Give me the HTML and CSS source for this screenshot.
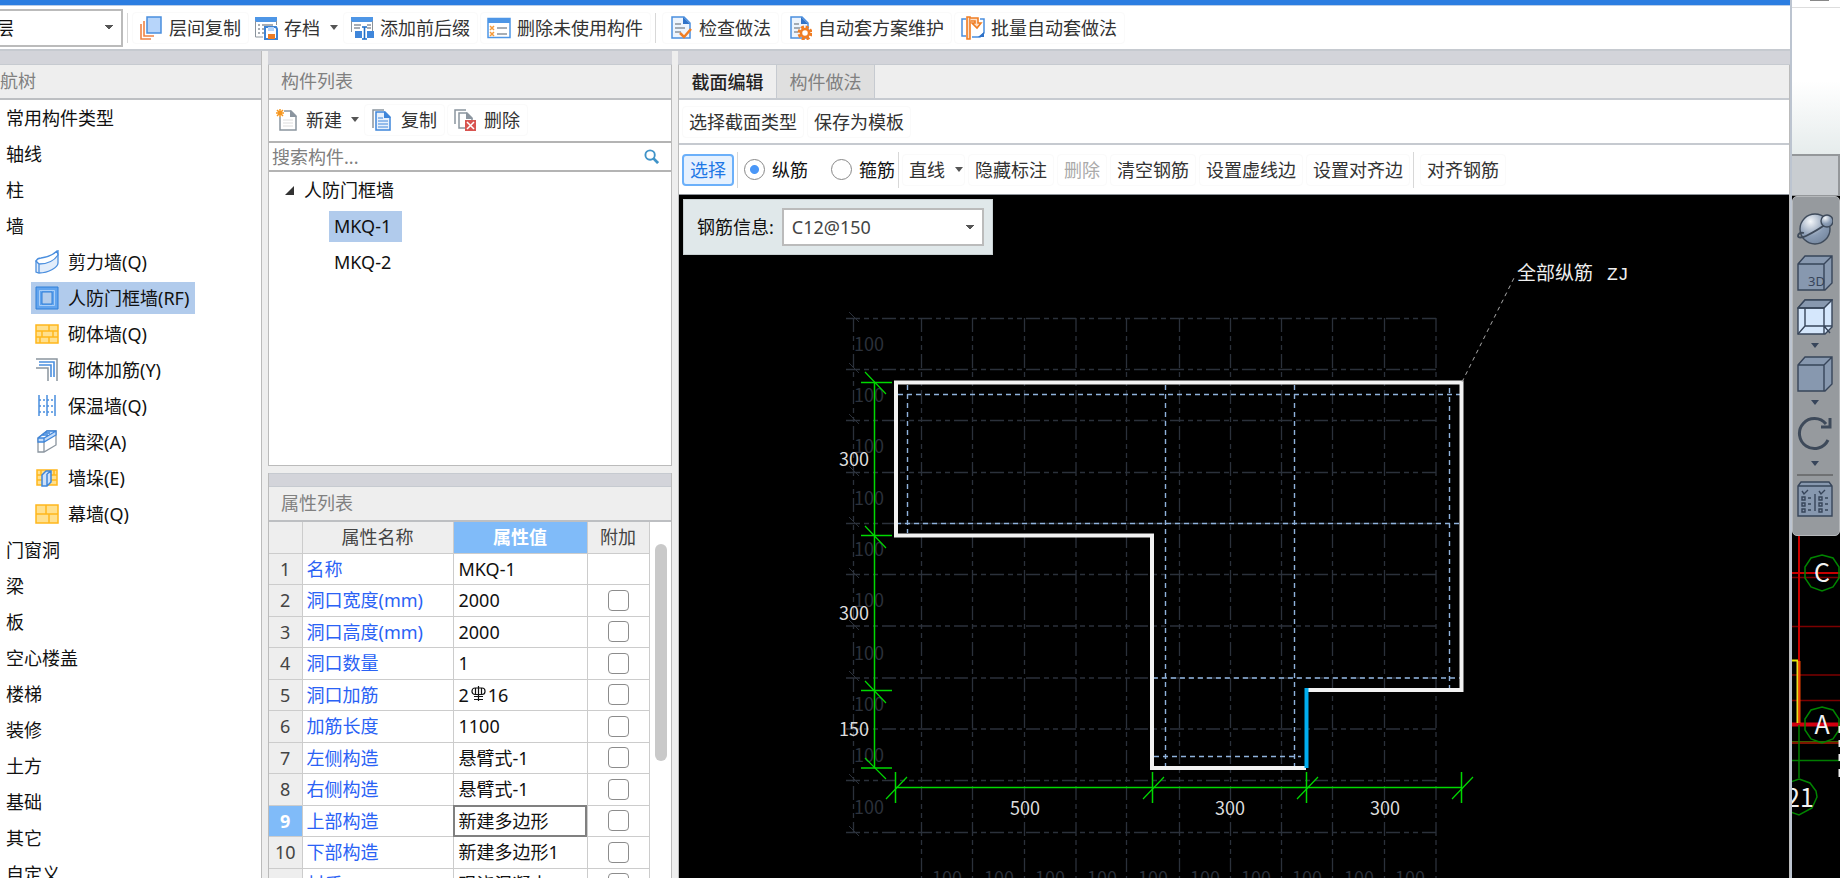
FILE: index.html
```html
<!DOCTYPE html>
<html lang="zh-CN">
<head>
<meta charset="utf-8">
<title>截面编辑</title>
<link rel="stylesheet" href="styles.css">
</head>
<body>
<main class="app">
  <div class="titlebar"></div>
  <div class="toolbar main-toolbar">
    <select class="combo floor-combo" aria-label="楼层"><option>层</option></select>
    <span class="sep first"></span>
    <button class="btn"><svg class="icon" viewBox="0 0 24 24" fill="none"><path d="M2 8v15h10M5 5v15h10" stroke="#ee8345" stroke-width="1.600"/><path d="M8 1h14v16H8z" fill="#b7d5fa" stroke="#4a8ede" stroke-width="1.500"/></svg>层间复制</button>
    <button class="btn drop"><svg class="icon" viewBox="0 0 24 24" fill="none"><path d="M1 1h22v5H1z" fill="#4e96e6"/><path d="M1.500 5v16H9M22.500 5v4" stroke="#8a939c"/><path d="M4 9h2M8 9h11M4 13h2M8 13h3M4 17h2M8 17h2" stroke="#8a939c" stroke-width="1.500"/><path d="M11 11h11l1 2v10H11z" fill="#fff" stroke="#3d83d4" stroke-width="2"/><path d="M14 11h6v4h-6z" fill="#b7d5fa"/><path d="M14 18h7v5h-7z" fill="#f07d23"/></svg>存档<i class="caret"></i></button>
    <button class="btn"><svg class="icon" viewBox="0 0 24 24" fill="none"><path d="M1 1h22v5H1z" fill="#4e96e6"/><path d="M1.500 5v11M22.500 5v11" stroke="#8a939c"/><path d="M4 9h7M4 12h6M17 9h4M17 12h4" stroke="#8a939c" stroke-width="1.500"/><path d="M5 15h7v7H5zM17 15h7v7h-7z" fill="#3f86da"/><path d="M12 11h5M14.500 11v12M12 23h5" stroke="#1e6dc6" stroke-width="1.600"/></svg>添加前后缀</button>
    <button class="btn"><svg class="icon" viewBox="0 0 24 24" fill="none"><path d="M1 2.500h22v19H1z" fill="#fff" stroke="#4e96e6" stroke-width="1.500"/><path d="M1 2h22v5H1z" fill="#4e96e6"/><path d="m3 10 4 4m0-4-4 4m0 2 4 4m0-4-4 4" stroke="#f59a3a" stroke-width="1.500"/><path d="M10 12h10M10 18h10" stroke="#8a939c" stroke-width="1.500"/></svg>删除未使用构件</button>
    <span class="sep"></span>
    <button class="btn"><svg class="icon" viewBox="0 0 24 24" fill="none"><path d="M3 1h12l6 6v15H3z" fill="#edf4fd" stroke="#4a8ede" stroke-width="1.500"/><path d="M14 1v7h7z" fill="#2f72c8"/><path d="M6 8h6M6 12h10M6 16h6" stroke="#8a939c" stroke-width="1.500"/><path d="m11 17 4 4 7-8" stroke="#f07d23" stroke-width="2.500"/></svg>检查做法</button>
    <button class="btn"><svg class="icon" viewBox="0 0 24 24" fill="none"><path d="M3 1h11l6 6v15H3z" fill="#edf4fd" stroke="#4a8ede" stroke-width="1.500"/><path d="M13 1v7h7z" fill="#2f72c8"/><path d="M6 8h5M6 12h6M6 16h4" stroke="#8a939c" stroke-width="1.500"/><circle cx="17" cy="17" r="6" stroke="#f07d23" stroke-width="3" stroke-dasharray="3 1.700"/><circle cx="17" cy="17" r="4" fill="#fff" stroke="#f07d23" stroke-width="2.500"/></svg>自动套方案维护</button>
    <button class="btn"><svg class="icon" viewBox="0 0 24 24" fill="none"><path d="M5 3H1v17h4M19 3h4v14l-4 4h-8" stroke="#4a8ede" stroke-width="1.500"/><path d="M23 16v5h-6z" fill="#2f72c8"/><path d="M6 1h3v22H6z" fill="#fbe0cb" stroke="#f07d23" stroke-width="1.600"/><path d="M9 2h8v5h3l-4 5-5-5h3V5h-4" fill="#fbe0cb" stroke="#f07d23" stroke-width="1.600"/></svg>批量自动套做法</button>
  </div>
  <div class="workspace">
    <section class="panel nav-panel">
      <div class="strip"></div>
      <h2 class="panel-title"><span class="nav-title">导航树</span></h2>
      <ul class="tree">
        <li>常用构件类型</li><li>轴线</li><li>柱</li><li>墙</li>
        <li class="sub"><span class="node"><svg viewBox="0 0 24 24" fill="#e2edfb" stroke="#4a8ede" stroke-width="1.300"><path d="M1 11v11l3 1c10 0 19-6 19-10V1c-4 6-12 9-22 10z"/><path d="M1 11c1-2 2-3 5-3C13 7 19 4 22 1l1 4c-4 6-11 9-19 9zM4 14v9" fill="#fff"/></svg>剪力墙(Q)</span></li>
        <li class="sub"><span class="node selected"><svg viewBox="0 0 24 24" fill="#62a4ee" stroke="#2f7fd8"><path d="M1 1h22v22H1z"/><path d="M4.500 4.500h15v15h-15z" stroke="#a8cef8"/><path d="M7 6h10v12H7z" fill="#b4cdec"/></svg>人防门框墙(RF)</span></li>
        <li class="sub"><span class="node"><svg viewBox="0 0 24 24" fill="#ffe08e" stroke="#ffb71c" stroke-width="1.500"><path d="M1 3h22v18H1zM1 9h22M1 15h22M14 3v6M7 9v6M18 9v6M5 15v6M14 15v6"/></svg>砌体墙(Q)</span></li>
        <li class="sub"><span class="node"><svg viewBox="0 0 24 24" fill="none"><path d="M1 1h21v22M1 10h12v13" stroke="#8b959f" stroke-width="1.500"/><path d="M4 4h15v15M4 7h12v12" stroke="#4a8ede" stroke-width="1.600"/></svg>砌体加筋(Y)</span></li>
        <li class="sub"><span class="node"><svg viewBox="0 0 24 24" fill="none" stroke="#4a8ede"><path d="M4 1v21M12 1v21M20 1v21" stroke-width="1.500"/><path d="M4 6h16M4 12h16M4 18h16" stroke-dasharray="2 2" stroke-width="1.300"/></svg>保温墙(Q)</span></li>
        <li class="sub"><span class="node"><svg viewBox="0 0 24 24" fill="#fff" stroke="#8b959f" stroke-width="1.300"><path d="M3 8v14h6l12-7V1H12z"/><path d="M9 11v11"/><path d="M3 8 12 1h9v4L9 12H3zM9 8v4M3 8h6l12-7M7 5h6M9 3h6" fill="#c5dcf8" stroke="#3f86da"/></svg>暗梁(A)</span></li>
        <li class="sub"><span class="node"><svg viewBox="0 0 24 24" fill="#ffe08e" stroke="#ffb71c" stroke-width="1.500"><path d="M2 4h20v15H2zM2 9h20M2 14h20M6 4v5M19 4v5"/><path d="m7 9 4-4h5v11l-4 4H7zM12 8v12M12 8l4-3" fill="#cfe1f8" stroke="#3f86da"/></svg>墙垛(E)</span></li>
        <li class="sub"><span class="node"><svg viewBox="0 0 24 24" fill="#ffe08e" stroke="#ffb71c" stroke-width="1.500"><path d="M1 3h22v18H1zM1 12h22M11 3v9M14 12v9"/></svg>幕墙(Q)</span></li>
        <li>门窗洞</li><li>梁</li><li>板</li><li>空心楼盖</li><li>楼梯</li><li>装修</li><li>土方</li><li>基础</li><li>其它</li><li>自定义</li>
      </ul>
    </section>
    <div class="middle">
      <section class="panel list-panel">
        <div class="strip"></div>
        <h2 class="panel-title">构件列表</h2>
        <div class="toolbar list-toolbar">
          <button class="btn drop"><svg class="icon small" viewBox="0 0 22 22" fill="none"><path d="M4 2h11l5 5v14H4z" fill="#fff" stroke="#8b959f" stroke-width="1.500"/><path d="M14 1v7h7z" fill="#8b959f"/><path d="M7 11h10M7 14h10M7 17h10" stroke="#ddd"/><path d="M0 0h8v8H0z" fill="#fff"/><path d="M4 0v8M0 4h8M1 1l6 6M7 1 1 7" stroke="#f6961e" stroke-width="1.500"/></svg>新建<i class="caret"></i></button>
          <button class="btn"><svg class="icon small" viewBox="0 0 22 22" fill="none"><path d="M2 19V1h11" stroke="#8b959f" stroke-width="1.500"/><path d="M5 3h9l5 5v13H5z" fill="#e8f1fc" stroke="#3f86da" stroke-width="1.500"/><path d="M13 2v7h7z" fill="#3f86da"/><path d="M7 9h5M7 12h10M7 15h10M7 18h10" stroke="#3f86da"/></svg>复制</button>
          <button class="btn"><svg class="icon small" viewBox="0 0 22 22" fill="none"><path d="M1 15V1h11" stroke="#8b959f" stroke-width="1.500"/><path d="M11 19H5V4h8l5 5v3" stroke="#8b959f" stroke-width="1.500"/><path d="M12 3v7h7z" fill="#8b959f"/><path d="M11 11h11v11H11z" fill="#d85450"/><path d="m13 13 7 7m0-7-7 7" stroke="#fff" stroke-width="1.500"/></svg>删除</button>
        </div>
        <label class="search"><input type="text" placeholder="搜索构件..." aria-label="搜索构件"><svg viewBox="0 0 16 16" fill="none" stroke="#3f93c8"><circle cx="6.500" cy="6.500" r="5" stroke-width="2"/><path d="m10 10 5 5" stroke-width="3"/></svg></label>
        <ul class="comp-tree">
          <li><svg viewBox="0 0 10 10"><path d="M10 0v10H0z" fill="#333"/></svg>人防门框墙</li>
          <li class="leaf"><span class="selected">MKQ-1</span></li>
          <li class="leaf"><span>MKQ-2</span></li>
        </ul>
      </section>
      <section class="panel prop-panel">
        <div class="strip"></div>
        <h2 class="panel-title">属性列表</h2>
        <div class="prop-body">
          <table class="props">
            <colgroup><col class="c-no"><col class="c-name"><col class="c-value"><col class="c-add"></colgroup>
            <thead><tr><th></th><th>属性名称</th><th class="active">属性值</th><th>附加</th></tr></thead>
            <tbody>
              <tr><th>1</th><td class="name">名称</td><td>MKQ-1</td><td></td></tr>
              <tr><th>2</th><td class="name">洞口宽度(mm)</td><td>2000</td><td class="check"><input type="checkbox" aria-label="附加 洞口宽度"></td></tr>
              <tr><th>3</th><td class="name">洞口高度(mm)</td><td>2000</td><td class="check"><input type="checkbox" aria-label="附加 洞口高度"></td></tr>
              <tr><th>4</th><td class="name">洞口数量</td><td>1</td><td class="check"><input type="checkbox" aria-label="附加 洞口数量"></td></tr>
              <tr><th>5</th><td class="name">洞口加筋</td><td>2<svg class="rebar" viewBox="0 0 17 15" fill="none" stroke="#111" stroke-width="1.200"><path d="M8.500 0v15M4 10.500h9M4 13.500h9M5.500 2v6.500M11.500 2v6.500"/><rect x="2" y="2" width="13" height="6.500" rx="3"/></svg>16</td><td class="check"><input type="checkbox" aria-label="附加 洞口加筋"></td></tr>
              <tr><th>6</th><td class="name">加筋长度</td><td>1100</td><td class="check"><input type="checkbox" aria-label="附加 加筋长度"></td></tr>
              <tr><th>7</th><td class="name">左侧构造</td><td>悬臂式-1</td><td class="check"><input type="checkbox" aria-label="附加 左侧构造"></td></tr>
              <tr><th>8</th><td class="name">右侧构造</td><td>悬臂式-1</td><td class="check"><input type="checkbox" aria-label="附加 右侧构造"></td></tr>
              <tr><th class="active">9</th><td class="name">上部构造</td><td class="editing">新建多边形</td><td class="check"><input type="checkbox" aria-label="附加 上部构造"></td></tr>
              <tr><th>10</th><td class="name">下部构造</td><td>新建多边形1</td><td class="check"><input type="checkbox" aria-label="附加 下部构造"></td></tr>
              <tr><th>11</th><td class="name">材质</td><td>现浇混凝土</td><td class="check"><input type="checkbox" aria-label="附加 材质"></td></tr>
            </tbody>
          </table>
          <div class="scroll"><div class="thumb"></div></div>
        </div>
      </section>
    </div>
    <section class="panel editor">
      <div class="strip"></div>
      <div class="tabs" role="tablist"><button class="tab current" role="tab">截面编辑</button><button class="tab" role="tab">构件做法</button></div>
      <div class="toolbar type-bar"><button class="btn text">选择截面类型</button><button class="btn text">保存为模板</button></div>
      <div class="toolbar draw-bar">
        <button class="btn text pressed">选择</button><span class="sep"></span>
        <label class="radio"><input type="radio" name="bar" checked>纵筋</label>
        <label class="radio"><input type="radio" name="bar">箍筋</label><span class="sep"></span>
        <button class="btn text line">直线<i class="caret"></i></button>
        <button class="btn text">隐藏标注</button><button class="btn text" disabled>删除</button><button class="btn text">清空钢筋</button><button class="btn text">设置虚线边</button><button class="btn text">设置对齐边</button><span class="sep"></span>
        <button class="btn text">对齐钢筋</button>
      </div>
      <div class="canvas">
        <svg class="drawing" width="1111" height="683" viewBox="679 195 1111 683" fill="none">
          <g stroke="#2b313b" stroke-width="1.300" stroke-dasharray="14 4 5 4 5 4">
            <path d="M846 318.500H1436"/><path d="M846 369.500H1436"/><path d="M846 420.500H1436"/><path d="M846 472.500H1436"/><path d="M846 523.500H1436"/><path d="M846 574.500H1436"/><path d="M846 626H1436"/><path d="M846 678H1436"/><path d="M846 729H1436"/><path d="M846 780.500H1436"/><path d="M846 832.500H1436"/>
            <path d="M853.500 318V833"/><path d="M921.500 318V878"/><path d="M972.500 318V878"/><path d="M1024.500 318V878"/><path d="M1076 318V878"/><path d="M1126.500 318V878"/><path d="M1179.500 318V878"/><path d="M1230.500 318V878"/><path d="M1281.500 318V878"/><path d="M1332.500 318V878"/><path d="M1384.500 318V878"/><path d="M1436 318V878"/>
          </g>
          <path stroke="#2b313b" d="m849 312 10 10m-10 41 10 10m-10 41 10 10m-10 42 10 10m-10 41 10 10m-10 41 10 10m-10 42 10 10m-10 41 10 10m-10 42 10 10m-10 41 10 10m-10 42 10 10"/>
          <g class="grid-label">
            <text x="854" y="351">100</text><text x="854" y="402">100</text><text x="854" y="453">100</text><text x="854" y="505">100</text><text x="854" y="556">100</text><text x="854" y="607">100</text><text x="854" y="660">100</text><text x="854" y="711">100</text><text x="854" y="762">100</text><text x="854" y="814">100</text>
          </g>
          <g class="grid-label mid">
            <text x="947" y="885">100</text><text x="999" y="885">100</text><text x="1050" y="885">100</text><text x="1102" y="885">100</text><text x="1153" y="885">100</text><text x="1205" y="885">100</text><text x="1256" y="885">100</text><text x="1307" y="885">100</text><text x="1359" y="885">100</text><text x="1410" y="885">100</text>
          </g>
          <g stroke="#8fb2dc" stroke-width="1.400" stroke-dasharray="5 4">
            <path d="M898 394.500H1460"/><path d="M896 523.500H1460"/><path d="M1153 678H1460"/><path d="M1154 756.500H1301"/>
            <path d="M907.500 385V533"/><path d="M1165.500 385V766"/><path d="M1294.500 385V766"/><path d="M1449.500 388V690"/>
          </g>
          <path stroke="#00d800" stroke-width="1.500" d="M874.500 383V768M861 382.500h31M861 535.500h31M861 690.500h31M861 768h31M896 787.500H1461M895.500 772v31M1152.500 772v31M1306.500 772v31M1461.500 772v31"/>
          <path stroke="#00d800" stroke-width="1.200" d="m865 372 21 22M865 526l21 22M865 681l21 22M865 758l21 21M886 799l21-22M1143 799l21-22M1297 799l21-22M1452 799l21-22"/>
          <path stroke="#f2f2f2" stroke-width="4" d="M1306.500 690H1461.500V382.500H896V535.500H1152V768H1306"/>
          <path stroke="#00adef" stroke-width="4" d="M1306.500 688V768"/>
          <path stroke="#aaa" stroke-dasharray="4 4" d="M1462 382 1515 276"/>
          <g class="dim mid">
            <text x="854" y="466">300</text><text x="854" y="620">300</text><text x="854" y="736">150</text>
            <text x="1025" y="815">500</text><text x="1230" y="815">300</text><text x="1385" y="815">300</text>
          </g>
          <text class="note" x="1517" y="280">全部纵筋</text><text class="note-code" x="1607" y="280">ZJ</text>
        </svg>
        <div class="rebar-info"><label for="rebar">钢筋信息:</label><select class="combo" id="rebar"><option>C12@150</option></select></div>
      </div>
    </section>
  </div>
</main>
<aside class="side">
  <div class="side-title"><i></i></div>
  <div class="side-fade"></div>
  <div class="side-head"></div>
  <div class="view-tools">
    <button aria-label="动态观察"><svg viewBox="0 0 36 36" fill="none" stroke="#3e4a5a" stroke-width="1.400"><defs><radialGradient id="ball" cx=".35" cy=".25" r=".8"><stop offset="0" stop-color="#f4f7fa"/><stop offset=".6" stop-color="#8b9db5"/><stop offset="1" stop-color="#75879f"/></radialGradient></defs><circle cx="18" cy="18" r="15" fill="url(#ball)"/><path d="M7 22c-4-1-6 1-6 3s4 2 8 0S25 16 29 13" stroke-width="1.800"/><circle cx="30" cy="10" r="6" fill="url(#ball)"/></svg></button>
    <button aria-label="三维"><svg viewBox="0 0 36 36" fill="#8798af" stroke="#37455a" stroke-width="1.400"><path d="M1 9 8 1h27v27l-7 7H1zM1 9h26v26M27 9l8-8"/><text x="11" y="31" class="three">3D</text></svg></button>
    <button aria-label="线框"><svg viewBox="0 0 36 36" fill="#d5e7fc" stroke="#37455a" stroke-width="1.400"><path d="M1 9 8 1h27v27l-7 7H1z"/><path d="M1 9 8 1h27l-8 8z" fill="#8798af"/><path d="M1 9h26v26M8 9v18h27M8 27l-7 8M27 27l6 7" fill="none"/></svg></button>
    <i class="caret"></i>
    <button aria-label="实体"><svg viewBox="0 0 36 36" fill="#8798af" stroke="#37455a" stroke-width="1.400"><path d="M1 9 8 1h27v27l-7 7H1zM1 9h26v26M27 9l8-8"/></svg></button>
    <i class="caret"></i>
    <button class="rotate" aria-label="旋转"><svg viewBox="0 0 36 36" fill="none" stroke="#3e4a5a" stroke-width="3"><path d="M31 25A15 15 0 1 1 29 9M33 3v9h-9"/></svg></button>
    <i class="caret"></i>
    <hr>
    <button aria-label="显示设置"><svg viewBox="0 0 36 36" fill="#8798af" stroke="#37455a" stroke-width="1.400"><path d="M1 5 4 1h28l3 4v30H1zM1 5h34"/><path d="m5 10 2 3 4-4m11 1 2 3 4-4M18 13v17M5 16h3v3H5zM5 22h3v3H5zM5 28h3v3H5zM22 16h3v3h-3zM22 22h3v3h-3zM22 28h3v3h-3zM11 17h3m-3 6h3m-3 6h3m14-12h3m-3 6h3m-3 6h3" fill="none"/></svg></button>
  </div>
  <svg class="plan" width="48" height="342" viewBox="1792 536 48 342" fill="none">
    <path d="M1792 577.500h48M1792 626.500h48M1792 675h48M1792 700.500h48" stroke="#7c0000" stroke-width="1.500"/>
    <path d="M1792 573h48M1799 536v188" stroke="#c80000" stroke-width="2"/>
    <path d="M1792 724.500h48" stroke="#d00010" stroke-width="4"/>
    <path d="M1792 743h48" stroke="#7c1500" stroke-width="2"/><path d="M1792 741.500h48" stroke="#3d5c00"/>
    <path d="M1792 760.500h48M1799 725v53" stroke="#007c00" stroke-width="1.500"/>
    <path d="M1792 660.500h6" stroke="#e8e800" stroke-width="2"/><path d="M1797.500 661v62" stroke="#e8e020" stroke-width="2"/><path d="M1799.500 661v62" stroke="#f04000" stroke-width="2"/>
    <g stroke="#008400" stroke-width="1.500"><path d="m1822 555 11 3 6 9v11l-6 9-11 4-11-4-6-9v-11l6-9z"/><path d="m1822 707 11 3 6 9v11l-6 9-11 4-11-4-6-9v-11l6-9z"/><path d="m1799 779 11 4 6 8 1 6-5 11-13 7-11-4-6-8v-11l6-9z"/></g>
    <g class="axis-label mid"><text x="1822" y="582">C</text><text x="1822" y="734">A</text><text x="1800" y="807">21</text></g>
    <path d="M1839.500 726v7m0 7v7m0 7v7m0 8v8" stroke="#eee" stroke-width="2"/>
  </svg>
</aside>
</body>
</html>
```
FILE: styles.css
```css
* { box-sizing: border-box; }
body {
  margin: 0;
  height: 100vh;
  display: flex;
  overflow: hidden;
  background: #eee;
  color: #111;
  font: 18px/24px "Noto Sans", "Noto Sans CJK SC", sans-serif;
}
button, input, select { font: inherit; color: inherit; }
ul { list-style: none; margin: 0; padding: 0; }
.app {
  flex: 1;
  min-width: 0;
  display: flex;
  flex-direction: column;
  border-right: 2px solid #bcc4d0;
}
.titlebar { height: 6px; background: #2b7de1; border-bottom: 1px solid #b9cde8; flex: none; }
.toolbar { display: flex; align-items: center; background: #fff; flex: none; white-space: nowrap; }
.main-toolbar { height: 45px; gap: 2px; border-bottom: 2px solid #c6cad0; }
.btn {
  display: flex;
  align-items: center;
  gap: 6px;
  height: 32px;
  padding: 0 7px 0 6px;
  border: 1px solid #fafafa;
  border-radius: 4px;
  background: #fff;
  color: #333;
  flex: none;
}
.btn.drop { padding: 0 2px; border-color: #fff; }
.btn.text { padding: 0 6px; }
.btn:disabled { color: #aaa; }
.btn.pressed { background: #e6f1fe; border: 2px solid #6bb0fa; color: #1f78e6; padding: 0 6px; }
.icon { width: 24px; height: 24px; flex: none; }
.icon.small { width: 22px; height: 22px; }
.caret {
  width: 8px;
  height: 5px;
  background: #555;
  clip-path: polygon(0 0, 100% 0, 50% 100%);
  flex: none;
}
.btn .caret { margin-left: 4px; }
.sep { width: 1px; height: 30px; background: #d8d8d8; margin: 0 4px 0 2px; flex: none; }
.sep.first { margin-right: 2px; }
.combo {
  appearance: none;
  border: 2px solid #bbb;
  border-radius: 0;
  height: 38px;
  padding: 0 8px;
  background: #fff conic-gradient(from -39deg at 50% 100%, #555 78deg, transparent 0) no-repeat right 8px center / 8px 5px;
}
.floor-combo { width: 127px; margin-left: -4px; padding: 0; border-left: 0; }
.workspace { flex: 1; min-height: 0; display: grid; grid-template-columns: 262px 404px 1fr; column-gap: 6px; }
.panel { display: flex; flex-direction: column; min-height: 0; min-width: 0; background: #fff; border: 1px solid #bbb; border-width: 0 1px; }
.nav-panel { border-left: 0; overflow: hidden; }
.strip { height: 14px; background: #d3d4da; border-bottom: 1px solid #c6cad0; flex: none; margin: 0 -1px; }
.panel-title {
  margin: 0;
  height: 35px;
  padding: 0 12px;
  line-height: 32px;
  font-size: 18px;
  font-weight: 400;
  color: #808080;
  background: #eee;
  border-bottom: 2px solid #bdbfc2;
  flex: none;
}
.nav-panel .panel-title { padding: 0; }
.nav-title { margin-left: -18px; }
.tree li { height: 36px; line-height: 36px; padding-left: 6px; }
.tree .sub { padding-left: 31px; display: flex; align-items: center; }
.node { display: flex; align-items: center; gap: 9px; height: 32px; padding: 0 6px 0 4px; }
.node svg { width: 24px; height: 24px; }
.selected { background: #b1cbec; }
.middle { display: flex; flex-direction: column; min-height: 0; gap: 7px; }
.list-panel { height: 415px; border-bottom: 1px solid #bbb; flex: none; }
.prop-panel { flex: 1; overflow: hidden; }
.prop-panel .strip { border-top: 1px solid #c6cad0; }
.list-toolbar { height: 41px; padding: 0 0 2px 4px; gap: 2px; }
.list-toolbar .btn { gap: 8px; }
.list-toolbar .caret { margin-left: 1px; }
.search { display: flex; align-items: center; height: 31px; border: solid #b4b4b4; border-width: 2px 0; padding-right: 12px; flex: none; }
.search input { flex: 1; min-width: 0; border: 0; padding: 0 3px; outline: 0; }
.search input::placeholder { color: #808080; }
.search svg { width: 15px; height: 15px; }
.comp-tree li { height: 36px; display: flex; align-items: center; gap: 10px; padding-left: 16px; }
.comp-tree svg { width: 9px; height: 9px; }
.comp-tree .leaf { padding-left: 60px; }
.leaf span { line-height: 31px; padding: 0 11px 0 5px; }
.prop-body { display: flex; }
.props { table-layout: fixed; width: 380px; height: 378px; border-collapse: collapse; flex: none; }
.props th, .props td { border: solid #ccc; border-width: 0 1px 1px 0; padding: 0; line-height: 24px; height: 31px; }
.props th { background: #eee; font-weight: 400; color: #444; }
.props th.active { background: #80bbf9; color: #fff; font-weight: 700; }
.props td { padding-left: 5px; white-space: nowrap; }
.props td.name { color: #2a62f5; padding-left: 4px; }
.props td.check { padding: 0; }
.props td.editing { outline: 2px solid #808080; outline-offset: -2px; }
.check input { appearance: none; display: block; width: 21px; height: 21px; margin: 0 auto; border: 1px solid #8c8c8c; border-radius: 4px; background: #fff; }
.c-no { width: 33px; }
.c-name { width: 151px; }
.c-value { width: 134px; }
.c-add { width: 62px; }
.rebar { width: 19px; height: 15px; vertical-align: 1px; }
.scroll { padding: 22px 5px 0; }
.thumb { width: 12px; height: 217px; border-radius: 6px; background: #c9c9c9; }
.tabs { height: 35px; display: flex; background: #eee; border-bottom: 2px solid #c6cad0; flex: none; }
.tab { border: 0; border-right: 1px solid #c6cad0; background: #dfdfdf; color: #808080; padding: 0 12px; width: 98px; white-space: nowrap; }
.tab.current { background: #eee; color: #222; font-weight: 500; }
.type-bar { height: 45px; border-bottom: 2px solid #c6cad0; padding-left: 3px; gap: 3px; }
.draw-bar { height: 50px; border-bottom: 1px solid #8d9299; padding-left: 3px; gap: 3px; }
.draw-bar .sep { height: 36px; margin: 0 3px 0 0; }
.radio { display: flex; align-items: center; gap: 7px; color: #111; padding-right: 20px; }
.draw-bar .radio + .sep { margin: 0 0 0 -20px; }
.btn.line { padding-right: 1px; }
.radio input { appearance: none; width: 21px; height: 21px; margin: 0; border: 1px solid #888; border-radius: 50%; background: #fff; }
.radio input:checked { background: radial-gradient(circle, #4a97f7 4px, #fff 5px); }
.canvas { flex: 1; min-height: 0; position: relative; overflow: hidden; background: #000; }
.drawing, .plan { display: block; }
.drawing text, .plan text { font-family: "Noto Sans CJK SC", sans-serif; font-size: 18px; }
.mid { text-anchor: middle; }
.grid-label { fill: #2b313b; }
.dim { fill: #ddd; }
.drawing .note { fill: #eee; font-size: 19px; }
.drawing .note-code { fill: #eee; font-family: "Liberation Mono", monospace; }
.rebar-info {
  position: absolute;
  left: 4px;
  top: 4px;
  display: flex;
  align-items: center;
  gap: 8px;
  padding: 8px 8px 8px 13px;
  background: #e0e8ea;
  border: 1px solid #c8d0d2;
}
.rebar-info .combo { width: 202px; color: #444; }
.side { width: 48px; flex: none; display: flex; flex-direction: column; background: #000; overflow: hidden; }
.side-title { height: 8px; background: #fff; border-bottom: 1px solid #ddd; flex: none; }
.side-title i { display: block; width: 19px; height: 1px; margin-left: 18px; background: #888; }
.side-fade { height: 146px; background: linear-gradient(#fff 50%, #e6ecec); flex: none; }
.side-head { height: 42px; background: #c9cdd1; border: solid #94979a; border-width: 2px 2px 1px 0; flex: none; }
.view-tools { height: 340px; display: flex; flex-direction: column; align-items: center; padding: 14px 2px 0 0; gap: 8px; background: #969a9e; border: 1px solid #b5b8bb; border-radius: 5px; flex: none; }
.view-tools button { border: 0; background: none; padding: 0; width: 36px; height: 36px; flex: none; }
.view-tools svg { display: block; width: 36px; height: 36px; }
.view-tools .rotate { margin: 2px 0; }
.view-tools .caret { background: #37455a; }
.view-tools hr { width: 36px; height: 2px; margin: 0 0 -3px; border: 0; background: #6f7173; flex: none; }
.view-tools .three { font: 13px "Noto Sans", sans-serif; fill: #37455a; stroke: none; }
.plan { flex: none; }
.plan text { font-size: 25px; fill: #f2f2f2; }
```
